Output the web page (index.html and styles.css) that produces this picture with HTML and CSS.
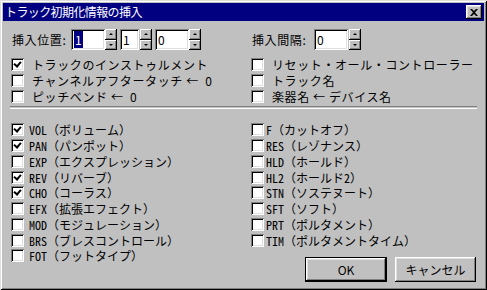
FILE: index.html
```html
<!DOCTYPE html>
<html lang="ja">
<head>
<meta charset="UTF-8">
<title>トラック初期化情報の挿入</title>
<link rel="stylesheet" href="styles.css">
</head>
<body>

<div class="window">
  <div class="titlebar">
    <span class="title">トラック初期化情報の挿入</span>
    <span class="close">
      <svg width="8" height="7" viewBox="0 0 8 7"><path d="M0 0h2l2 2 2-2h2L5 3.5 8 7H6L4 5 2 7H0l3-3.5z" fill="#000"/></svg>
    </span>
  </div>

  <div class="content">
    <div class="top">
      <div class="col">
        <div class="field">
          <span class="label label-pos">挿入位置:</span>
          <span class="edit w34"><span class="sel">1</span></span>
          <span class="arrows"><span class="up"></span><span class="down"></span></span>
          <span class="edit w19 gap3">1</span>
          <span class="arrows gap1"><span class="up"></span><span class="down"></span></span>
          <span class="edit w34 gap3">0</span>
          <span class="arrows"><span class="up"></span><span class="down"></span></span>
        </div>
        <div class="check on"><span class="box"></span>トラックのインストゥルメント</div>
        <div class="check"><span class="box"></span>チャンネルアフタータッチ ←&ensp;0</div>
        <div class="check"><span class="box"></span>ピッチベンド ←&ensp;0</div>
      </div>
      <div class="col">
        <div class="field">
          <span class="label label-gap">挿入間隔:</span>
          <span class="edit w34">0</span>
          <span class="arrows gap1"><span class="up"></span><span class="down"></span></span>
        </div>
        <div class="check"><span class="box"></span>リセット・オール・コントローラー</div>
        <div class="check"><span class="box"></span>トラック名</div>
        <div class="check"><span class="box"></span>楽器名 ← デバイス名</div>
      </div>
    </div>

    <div class="sep"></div>

    <div class="bottom">
      <div class="col">
        <div class="item on"><span class="box"></span>VOL（ボリューム）</div>
        <div class="item on"><span class="box"></span>PAN（パンポット）</div>
        <div class="item"><span class="box"></span>EXP（エクスプレッション）</div>
        <div class="item on"><span class="box"></span>REV（リバーブ）</div>
        <div class="item on"><span class="box"></span>CHO（コーラス）</div>
        <div class="item"><span class="box"></span>EFX（拡張エフェクト）</div>
        <div class="item"><span class="box"></span>MOD（モジュレーション）</div>
        <div class="item"><span class="box"></span>BRS（ブレスコントロール）</div>
        <div class="item"><span class="box"></span>FOT（フットタイプ）</div>
      </div>
      <div class="col col-right">
        <div class="item"><span class="box"></span>F（カットオフ）</div>
        <div class="item"><span class="box"></span>RES（レゾナンス）</div>
        <div class="item"><span class="box"></span>HLD（ホールド）</div>
        <div class="item"><span class="box"></span>HL2（ホールド2）</div>
        <div class="item"><span class="box"></span>STN（ソステヌート）</div>
        <div class="item"><span class="box"></span>SFT（ソフト）</div>
        <div class="item"><span class="box"></span>PRT（ポルタメント）</div>
        <div class="item"><span class="box"></span>TIM（ポルタメントタイム）</div>
        <div class="buttons">
          <span class="btn default"><span class="btn-face">OK</span></span>
          <span class="btn"><span class="btn-face">キャンセル</span></span>
        </div>
      </div>
    </div>
  </div>
</div>

</body>
</html>
```

FILE: styles.css
```css
body {
  margin: 0;
  font-family: "Noto Sans CJK JP", sans-serif;
  font-size: 12px;
  color: #000;
}

/* ウィンドウ枠 */
.window {
  box-sizing: border-box;
  width: 487px;
  height: 290px;
  padding: 3px;
  background: #c0c0c0;
  box-shadow: inset 1px 1px #dfdfdf, inset -1px -1px #000,
              inset 2px 2px #fff, inset -2px -2px #808080;
}
.titlebar {
  height: 18px;
  background: #000080;
  display: flex;
  align-items: center;
  justify-content: space-between;
  padding: 0 2px 0 2px;
}
.title {
  color: #fff;
  letter-spacing: -0.6px;
  line-height: 18px;
}
.close {
  width: 16px;
  height: 14px;
  background: #c0c0c0;
  display: flex;
  align-items: center;
  justify-content: center;
  box-shadow: inset -1px -1px #000, inset 1px 1px #fff,
              inset -2px -2px #808080, inset 2px 2px #dfdfdf;
}

.content { padding: 8px 8px 0 8px; }

.top, .bottom {
  display: grid;
  grid-template-columns: 240px 1fr;
}

/* 入力欄 */
.field {
  display: flex;
  align-items: center;
  height: 21px;
  margin-bottom: 6px;
}
.label {
  padding-left: 1px;
  letter-spacing: 0.6px;
  white-space: nowrap;
}
.label-pos { width: 59px; }
.label-gap { width: 62px; }
.edit {
  box-sizing: border-box;
  height: 21px;
  background: #fff;
  padding: 0 3px;
  line-height: 21px;
  box-shadow: inset 1px 1px #808080, inset -1px -1px #fff,
              inset 2px 2px #000, inset -2px -2px #dfdfdf;
}
.w34 { width: 34px; }
.w19 { width: 19px; }
.gap3 { margin-left: 3px; }
.gap1 { margin-left: 1px; }
.sel {
  background: #000080;
  color: #fff;
  padding: 0 1px;
}
.arrows {
  width: 12px;
  height: 21px;
  display: flex;
  flex-direction: column;
}
.up, .down {
  flex: 1;
  display: flex;
  align-items: center;
  justify-content: center;
  box-shadow: inset -1px -1px #000, inset 1px 1px #fff,
              inset -2px -2px #808080;
}
.up::after, .down::after {
  content: "";
  border-left: 2px solid transparent;
  border-right: 2px solid transparent;
}
.up::after { border-bottom: 2px solid #000; }
.down::after { border-top: 2px solid #000; }

/* チェックボックス */
.check, .item {
  display: flex;
  align-items: center;
  white-space: nowrap;
}
.check {
  height: 16px;
  letter-spacing: 0.6px;
}
.item {
  height: 15.75px;
  font-family: "Noto Sans Mono CJK JP", "Noto Sans CJK JP", monospace;
}
.box {
  box-sizing: border-box;
  flex: none;
  width: 13px;
  height: 13px;
  background: #fff;
  position: relative;
  box-shadow: inset 1px 1px #808080, inset -1px -1px #fff,
              inset 2px 2px #000, inset -2px -2px #dfdfdf;
}
.check .box { margin-right: 8px; }
.item .box { margin-right: 5px; }
.col-right .item .box { margin-right: 2px; }
.on .box::after {
  content: "";
  position: absolute;
  left: 3px;
  top: 2px;
  width: 3px;
  height: 5px;
  border-right: 2px solid #000;
  border-bottom: 2px solid #000;
  transform: translate(1px, 0) rotate(40deg);
}

.sep {
  height: 1px;
  margin: 2px -1px 13px -1px;
  border-top: 1px solid #808080;
  border-bottom: 1px solid #fff;
}

/* ボタン */
.buttons {
  display: flex;
  justify-content: flex-end;
  gap: 8px;
  margin-top: 9px;
}
.btn {
  box-sizing: border-box;
  width: 81px;
  height: 25px;
  display: flex;
}
.btn.default {
  width: 82px;
  border: 1px solid #000;
}
.btn-face {
  flex: 1;
  display: flex;
  align-items: center;
  justify-content: center;
  box-shadow: inset -1px -1px #000, inset 1px 1px #fff,
              inset -2px -2px #808080, inset 2px 2px #dfdfdf;
}
```
